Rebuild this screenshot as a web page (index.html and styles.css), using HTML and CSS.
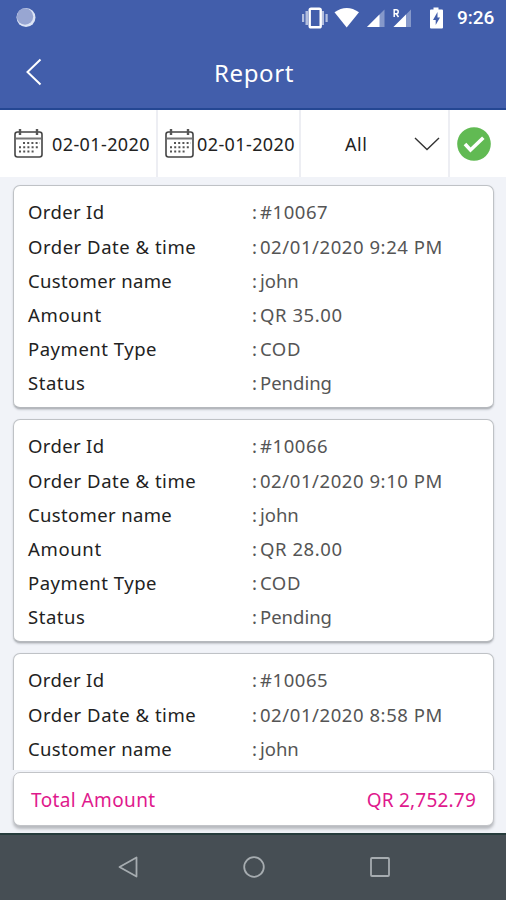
FILE: index.html
```
<!DOCTYPE html>
<html lang="en">
<head>
<meta charset="utf-8">
<title>Report</title>
<link rel="stylesheet" href="styles.css">
</head>
<body>
<div class="screen">
  <header class="top">
    <div class="status-bar">
      <svg class="dot" width="22" height="22" viewBox="0 0 22 22"><circle cx="11" cy="10.500" r="9.500" fill="#dce4f5"/><circle cx="10" cy="9.500" r="8.200" fill="#98a6d2"/></svg>
      <svg class="signals" width="148" height="24" viewBox="300 5.500 148 24">
        <g fill="#b3bfdf"><path d="M304.500 10.500h2.500v14h-2.500zM301 13.500h2.200v8H301zM320.500 10.500h2.500v14h-2.500zM324.500 13.500h2.200v8h-2.200z"/></g>
        <rect x="308.700" y="8.200" width="11" height="18.600" rx="1.400" fill="none" stroke="#fff" stroke-width="2.400"/>
        <path fill="#fff" d="M333.500 11.800Q345.700 3 358 11.800L345.700 27z"/>
        <path fill="#8598ca" d="M383.500 9V26.500H366z"/><path fill="#fff" d="M378.500 14V26.500H366z"/>
        <path fill="#8598ca" d="M410 9V26.500H392.500z"/><path fill="#fff" d="M405 14V26.500H392.500z"/>
        <path fill="none" stroke="#fff" stroke-width="1.500" d="M393.200 16.500V9.200h2q2 0 2 2t-2 2h-2m2 0l2.300 3.300"/>
        <path fill="#fff" d="M429 9h3.500V7h5v2h3.500q1 0 1 1v17q0 1-1 1h-11q-1 0-1-1V10q0-1 1-1z"/>
        <path fill="#425eab" d="M436.500 11.500l-4.500 8h2.700v5l4.300-7.500h-2.500z"/>
      </svg>
      <span class="clock">9:26</span>
    </div>
    <div class="title-bar">
      <svg class="back" width="20" height="30" viewBox="0 0 20 30"><path d="M15.500 2.500L2.500 15l13 12.500" fill="none" stroke="#fff" stroke-width="2"/></svg>
      <h1 class="title">Report</h1>
    </div>
  </header>
  <div class="filters">
    <div class="filter from"><svg class="cal" width="29" height="29" viewBox="0 0 29 29"><use href="#calendar"/></svg><span class="date">02-01-2020</span></div>
    <div class="filter to"><svg class="cal" width="29" height="29" viewBox="0 0 29 29"><use href="#calendar"/></svg><span class="date">02-01-2020</span></div>
    <div class="filter kind"><span class="all">All</span><svg width="26" height="14" viewBox="0 0 26 14"><path d="M1 1l12 11.500L25 1" fill="none" stroke="#333" stroke-width="1.400"/></svg></div>
    <div class="filter apply"><svg width="34" height="34" viewBox="0 0 34 34"><circle cx="17" cy="17" r="16.800" fill="#61ba53"/><path d="M8 17l5.500 6L26.300 10.800" fill="none" stroke="#fff" stroke-width="3.600"/></svg></div>
  </div>
  <main class="list">
    <dl class="card">
      <div class="row"><dt class="k-id">Order Id</dt><dd>: <b class="v-id">#10067</b></dd></div>
      <div class="row"><dt class="k-date">Order Date &amp; time</dt><dd>: <b class="v-date">02/01/2020 9:24 PM</b></dd></div>
      <div class="row"><dt class="k-name">Customer name</dt><dd>: <b class="v-name">john</b></dd></div>
      <div class="row"><dt class="k-amount">Amount</dt><dd>: <b class="v-amount">QR 35.00</b></dd></div>
      <div class="row"><dt class="k-type">Payment Type</dt><dd>: <b class="v-type">COD</b></dd></div>
      <div class="row"><dt class="k-status">Status</dt><dd>: <b class="v-status">Pending</b></dd></div>
    </dl>
    <dl class="card">
      <div class="row"><dt class="k-id">Order Id</dt><dd>: <b class="v-id">#10066</b></dd></div>
      <div class="row"><dt class="k-date">Order Date &amp; time</dt><dd>: <b class="v-date">02/01/2020 9:10 PM</b></dd></div>
      <div class="row"><dt class="k-name">Customer name</dt><dd>: <b class="v-name">john</b></dd></div>
      <div class="row"><dt class="k-amount">Amount</dt><dd>: <b class="v-amount">QR 28.00</b></dd></div>
      <div class="row"><dt class="k-type">Payment Type</dt><dd>: <b class="v-type">COD</b></dd></div>
      <div class="row"><dt class="k-status">Status</dt><dd>: <b class="v-status">Pending</b></dd></div>
    </dl>
    <dl class="card open">
      <div class="row"><dt class="k-id">Order Id</dt><dd>: <b class="v-id">#10065</b></dd></div>
      <div class="row"><dt class="k-date">Order Date &amp; time</dt><dd>: <b class="v-date">02/01/2020 8:58 PM</b></dd></div>
      <div class="row"><dt class="k-name">Customer name</dt><dd>: <b class="v-name">john</b></dd></div>
    </dl>
  </main>
  <div class="total"><span class="total-label">Total Amount</span><span class="total-value">QR 2,752.79</span></div>
  <nav class="nav">
    <svg width="22" height="24" viewBox="0 0 22 24"><path d="M19.500 2.500v19L2.500 12z" fill="none" stroke="#a6acb0" stroke-width="1.800" stroke-linejoin="round"/></svg>
    <svg width="22" height="24" viewBox="0 0 22 24"><circle cx="11" cy="12" r="9.800" fill="none" stroke="#a6acb0" stroke-width="1.800"/></svg>
    <svg width="22" height="24" viewBox="0 0 22 24"><rect x="2" y="3" width="18" height="18" rx="1" fill="none" stroke="#a6acb0" stroke-width="1.800"/></svg>
  </nav>
</div>
<svg class="defs" width="0" height="0">
  <symbol id="calendar" viewBox="0 0 29 29">
    <rect x="1" y="3" width="27" height="25" rx="2.500" fill="none" stroke="#444" stroke-width="1.600"/>
    <path d="M2 9.500h25" stroke="#777" stroke-width="2"/>
    <path d="M6 0v6M23 0v6" stroke="#555" stroke-width="2.400"/>
    <path d="M9 14h17M5 18.300h20M5 22.600h16" fill="none" stroke="#555" stroke-width="2" stroke-dasharray="2 2.200"/>
  </symbol>
</svg>
</body>
</html>
```

FILE: styles.css
```
* { box-sizing: border-box; }
body { margin: 0; font-family: "Noto Sans", "Open Sans", sans-serif; }
.defs { position: absolute; }
.screen { width: 506px; height: 900px; display: flex; flex-direction: column; background: #f1f3f8; overflow: hidden; }
.top { height: 110px; flex: none; background: #425eab; color: #fff; border-bottom: 2px solid #244793; }
.status-bar { height: 36px; display: flex; align-items: center; padding: 0 10px 0 15px; }
.signals { margin-left: auto; margin-right: 8px; }
.clock { font: 500 19px/36px Roboto, sans-serif; width: 39px; white-space: nowrap; }
.title-bar { height: 74px; display: grid; grid-template-columns: 60px 1fr 60px; align-items: center; }
.back { margin-left: 25px; margin-top: -2px; }
.title { margin: 0; padding-left: 2px; text-align: center; font-size: 24px; font-weight: 400; line-height: 32px; letter-spacing: .6px; }
.filters { height: 67px; flex: none; display: grid; grid-template-columns: 158px 143px 149px 56px; background: #fff; color: #222; font-size: 18px; }
.filter { display: flex; align-items: center; border-right: 2px solid #edeef3; white-space: nowrap; }
.from { padding-left: 14px; gap: 9px; }
.to { padding-left: 7px; gap: 3px; }
.date { letter-spacing: .4px; }
.all { letter-spacing: .6px; }
.kind { padding: 0 8px 0 44px; justify-content: space-between; }
.apply { border-right: 0; padding-left: 7px; }
.list { height: 593px; flex: none; padding: 8px 12px 0 13px; overflow: hidden; }
.card { margin: 0 0 10px; height: 224px; padding: 9.400px 14px 0; background: #fff; border: 1px solid #bfc2c6; border-bottom: 2px solid #b5b8bd; border-radius: 7px; box-shadow: 0 1px 2px #c5c8ce; }
.card.open { height: 240px; }
.row { height: 34.2px; display: grid; grid-template-columns: 224px 1fr; align-items: center; font-size: 18.5px; line-height: 34.2px; white-space: nowrap; }
.row dt { color: #222; }
.row dd { margin: 0; color: #555; display: flex; gap: 3px; }
.row b { font-weight: 400; }
.k-id, .k-name { letter-spacing: .35px; }
.k-date, .k-type, .k-status { letter-spacing: .52px; }
.k-amount { letter-spacing: .65px; }
.v-id, .v-date, .v-amount, .v-type { letter-spacing: .57px; }
.total { height: 54px; flex: none; margin: 2px 12px 0 13px; padding: 1px 17px 0; display: flex; align-items: center; justify-content: space-between; background: #fff; border: 1px solid #c2c4c8; border-radius: 7px; box-shadow: 0 3px 3px #b8babf; color: #df198d; font-size: 19px; }
.total-label { letter-spacing: .4px; }
.total-value { letter-spacing: .2px; }
.nav { margin-top: 7px; height: 67px; flex: none; padding: 0 0 2px 1px; background: #464e54; border-top: 2px solid #263c3c; display: flex; justify-content: center; align-items: center; gap: 104px; }
```
